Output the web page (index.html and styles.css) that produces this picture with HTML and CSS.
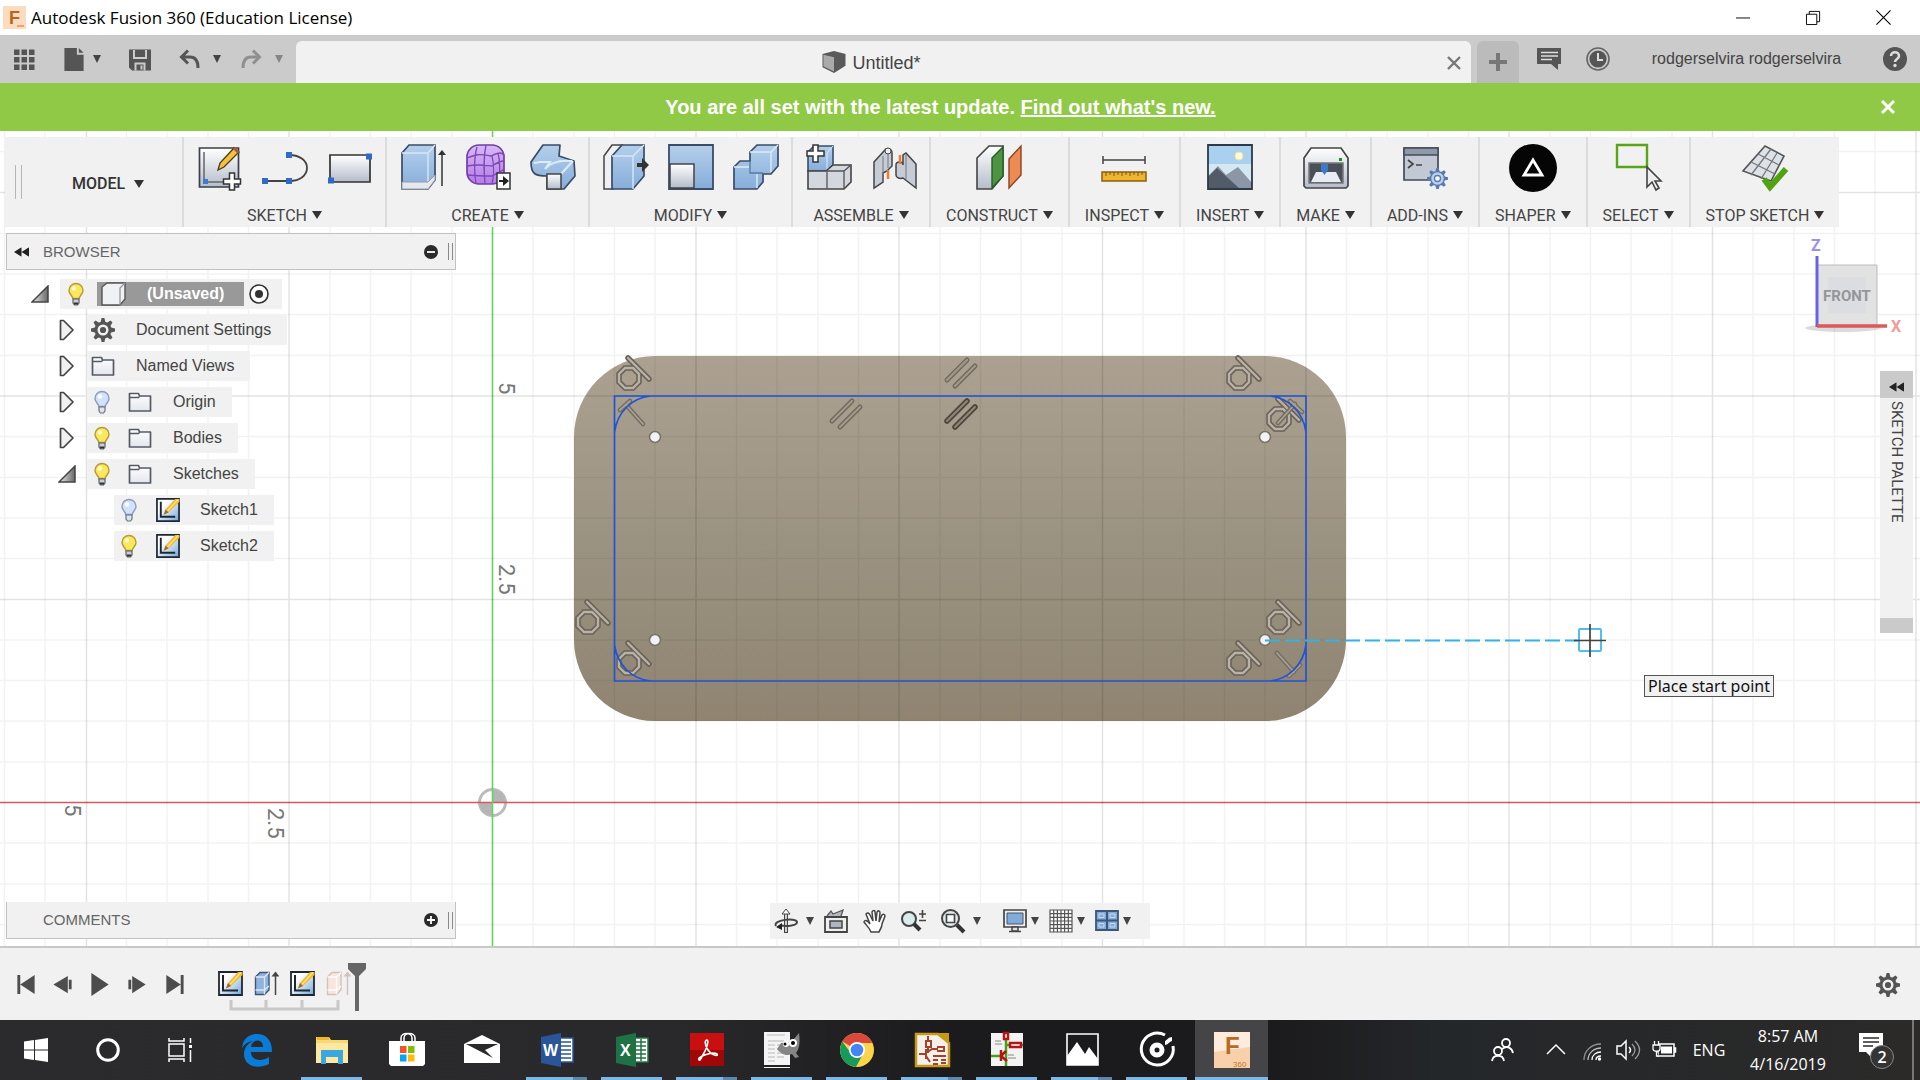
FILE: index.html
```html
<!DOCTYPE html>
<html lang="en">
<head>
<meta charset="utf-8">
<title>Autodesk Fusion 360 (Education License)</title>
<link rel="stylesheet" href="styles.css">
</head>
<body>
<svg class="defs" aria-hidden="true">
  <defs>
    <linearGradient id="blue" x1="0" y1="0" x2="0" y2="1"><stop offset="0" stop-color="#b4cfec"/><stop offset="1" stop-color="#86add9"/></linearGradient>
    <linearGradient id="steel" x1="0" y1="0" x2="0" y2="1"><stop offset="0" stop-color="#fff"/><stop offset="1" stop-color="#b4bccb"/></linearGradient>
    <linearGradient id="paper" x1="0" y1="0" x2="0" y2="1"><stop offset="0" stop-color="#fff"/><stop offset="1" stop-color="#e3e6ec"/></linearGradient>
    <linearGradient id="purple" x1="0" y1="0" x2="0" y2="1"><stop offset="0" stop-color="#d9b8f4"/><stop offset="1" stop-color="#b57bea"/></linearGradient>
    <linearGradient id="body" x1="0" y1="0" x2="0" y2="1"><stop offset="0" stop-color="#aca191"/><stop offset=".5" stop-color="#9b9382"/><stop offset="1" stop-color="#908471"/></linearGradient>
    <linearGradient id="tri" x1="0" y1="0" x2="1" y2="0"><stop offset="0" stop-color="#eee"/><stop offset="1" stop-color="#666"/></linearGradient>
    <linearGradient id="page" x1="0" y1="0" x2="1" y2="1"><stop offset=".3" stop-color="#fff"/><stop offset="1" stop-color="#6fa6dc"/></linearGradient>
  </defs>
  <symbol id="gear" viewBox="0 0 24 24"><g fill="currentColor"><circle cx="12" cy="12" r="8.6"/><path id="tooth" d="M9.6 4 10.6 0h2.8l1 4v16l-1 4h-2.8l-1-4z"/><use href="#tooth" transform="rotate(45 12 12)"/><use href="#tooth" transform="rotate(90 12 12)"/><use href="#tooth" transform="rotate(135 12 12)"/></g><circle cx="12" cy="12" r="4.3" fill="none" stroke="#f1f1f1" stroke-width="2.4"/></symbol>
  <symbol id="bulb-on" viewBox="0 0 18 24"><path d="M9 1.5a7 7 0 0 0-7 7c0 3.500 3.500 5 3.800 8h6.400c.3-3 3.800-4.500 3.800-8a7 7 0 0 0-7-7z" fill="#fbe75a" stroke="#b49a3a" stroke-width="1.4"/><circle cx="7" cy="6.500" r="2.200" fill="#fffbd0"/><path d="M6 17h6v4l-1.500 2h-3L6 21z" fill="#c9ced6" stroke="#5b6068" stroke-width="1.200"/><path d="M7 21.500h4" stroke="#333" stroke-width="2"/></symbol>
  <symbol id="bulb-off" viewBox="0 0 18 24"><path d="M9 1.500a7 7 0 0 0-7 7c0 3.500 3.500 5 3.800 8h6.400c.3-3 3.800-4.500 3.800-8a7 7 0 0 0-7-7z" fill="#d3e2fb" stroke="#8a9cc2" stroke-width="1.400"/><circle cx="7" cy="6.500" r="2.200" fill="#fff"/><path d="M6 17h6v4l-1.500 2h-3L6 21z" fill="#dfe3ea" stroke="#6b7280" stroke-width="1.200"/></symbol>
  <symbol id="folder" viewBox="0 0 24 22"><path d="M1.500 19V2.500h9l1 2.500h11v15h-21z" fill="url(#paper)" stroke="#555b66" stroke-width="1.700" stroke-linejoin="round"/><path d="M2 6.500h8.500l1.500-1.500" fill="none" stroke="#555b66" stroke-width="1.300"/></symbol>
  <symbol id="sketch" viewBox="0 0 25 25"><path d="M1 1h23v23H1z" fill="url(#page)" stroke="#1d2733" stroke-width="1.800"/><path d="M5 4v15.500h15" fill="none" stroke="#1d2733" stroke-width="2"/><path d="M8 17.500 10 12 20 1h4.500v3L13 15z" fill="#f4b92a"/><path d="m12 13.500 11-12" stroke="#ffe680" stroke-width="1.500"/><path d="M8 17.500 10 12l3 3z" fill="#9a6b3a"/></symbol>
  <symbol id="closed" viewBox="0 0 16 22"><path d="M1.500 1.500h3l9.500 9.500-9.500 9.500h-3z" fill="#f0f0f0" stroke="#444" stroke-width="1.700" stroke-linejoin="round"/></symbol>
  <symbol id="open" viewBox="0 0 18 18"><path d="M17 1v16H1z" fill="url(#tri)" stroke="#444" stroke-width="1.500"/></symbol>
  <symbol id="extrude" viewBox="0 0 25 25"><path d="M1.500 6 6 1.500h9V19l-4.500 4.500h-9z" fill="var(--face,#8fb3dd)" stroke="var(--edge,#3f5573)" stroke-width="1.400"/><path d="M1.500 6h9L15 1.500M10.500 6v17.500M1.500 19h9l4.500-4" fill="none" stroke="var(--lite,#dbe8f6)" stroke-width="1.300"/><path d="M21.500 24V3" stroke="var(--edge,#444)" stroke-width="1.500"/><path d="m17.500 5.500 4-5 4 5z" fill="var(--edge,#444)"/></symbol>
  <symbol id="tan" viewBox="-22 -24 46 46" overflow="visible"><g fill="none" stroke-linecap="round"><g stroke="#6a6256" stroke-width="5.500"><path d="M-4-10h8l6 6v8l-6 6h-8l-6-6v-8zM-1-20 20 1"/></g><g stroke="#b8b2a8" stroke-width="2.400"><path d="M-4-10h8l6 6v8l-6 6h-8l-6-6v-8zM-1-20 20 1"/></g></g></symbol>
  <symbol id="rewind" viewBox="0 0 16 10"><path d="M8 0v10L0 5zM16 0v10L8 5z" fill="#222"/></symbol>
</svg>

<header class="titlebar">
  <svg class="logo" viewBox="0 0 23 23"><path d="M0 0h23v23H0z" fill="#fbdcc0"/><text x="6" y="18" font-family="Liberation Sans" font-weight="700" font-size="18" fill="#b8661d">F</text><path d="M14 19h7v2h-7z" fill="#eba368"/></svg>
  <h1>Autodesk Fusion 360 (Education License)</h1>
  <div class="window-buttons">
    <button aria-label="Minimize"><svg viewBox="0 0 16 16"><path d="M0 8.500h15" stroke="#000"/></svg></button>
    <button aria-label="Restore"><svg viewBox="0 0 16 16"><path d="M.5 4.500h11v11H.5zM3.500 4.500v-3h11v11h-3" fill="none" stroke="#000"/></svg></button>
    <button aria-label="Close"><svg viewBox="0 0 16 16"><path d="m.5.5 15 15m0-15-15 15" stroke="#000" stroke-width="1.200"/></svg></button>
  </div>
</header>

<div class="appbar">
  <div class="quick">
    <button aria-label="Data panel"><svg class="i22" viewBox="0 0 22 22"><path d="M1 1h5.500v5.500H1zm7.500 0H14v5.500H8.500zM16 1h5.500v5.500H16zM1 8.500h5.500V14H1zm7.500 0H14V14H8.500zm7.500 0h5.500V14H16zM1 16h5.500v5.500H1zm7.500 0H14v5.500H8.500zm7.500 0h5.500v5.500H16z" fill="#555"/></svg></button>
    <button class="split near" aria-label="File"><svg class="i22" viewBox="0 0 22 24"><path d="M1 0h13v7h7v17H1z" fill="#555"/><path d="M16 0v5h5z" fill="#555"/></svg><i class="caret"></i></button>
    <button aria-label="Save"><svg class="i22" viewBox="0 0 22 22"><path d="M0 1h22v21H3l-3-3z" fill="#555"/><path d="M5 1.500v8h12v-8M6.500 22v-7h9v7M12.500 17v4" fill="none" stroke="#cbcbcb" stroke-width="2"/></svg></button>
    <div class="history">
      <button class="split" aria-label="Undo"><svg class="i22" viewBox="0 0 22 22"><path d="M9 2 2.500 8.500 9 15M3 8.500h8c6 0 8 5 8 11" fill="none" stroke="#555" stroke-width="3"/></svg><i class="caret"></i></button>
      <button class="split dim" aria-label="Redo"><svg class="i22" viewBox="0 0 22 22"><path d="m12 2 6.500 6.500L12 15M18 8.500h-8c-6 0-8 5-8 11" fill="none" stroke="#555" stroke-width="3"/></svg><i class="caret"></i></button>
    </div>
  </div>
  <div class="tab">
    <span class="tab-name"><svg viewBox="0 0 24 24"><path d="M0 3 12 0l12 3v12.500L12 23 0 17z" fill="#5a5a5a"/><path d="m1 4 11 2.500v15L1 16z" fill="#aaa"/></svg>Untitled*</span>
    <button class="tab-close" aria-label="Close tab"><svg viewBox="0 0 14 14"><path d="m1 1 12 12m0-12L1 13" stroke="#777" stroke-width="2.400"/></svg></button>
  </div>
  <button class="new-tab" aria-label="New tab"><svg viewBox="0 0 18 20"><path d="M9 1v18M0 10h18" stroke="#777" stroke-width="4"/></svg></button>
  <div class="account">
    <button aria-label="Comments"><svg class="i24" viewBox="0 0 24 24"><path d="M0 1h24v16h-3v6l-7-6H0z" fill="#555"/><path d="M4 5.500h17M4 9h17M4 12.500h11" stroke="#ddd" stroke-width="1.600"/></svg></button>
    <button aria-label="Job status"><svg class="i24" viewBox="0 0 24 24"><circle cx="12" cy="12" r="11" fill="none" stroke="#666" stroke-width="1.600"/><circle cx="12" cy="12" r="8.600" fill="#555"/><path d="M12 6v7h5" fill="none" stroke="#ddd" stroke-width="2"/></svg></button>
    <button class="user">rodgerselvira rodgerselvira</button>
    <button aria-label="Help"><svg class="i24" viewBox="0 0 24 24"><circle cx="12" cy="12" r="12" fill="#555"/><path d="M8 9c0-5 8-5 8 0 0 3-4 3-4 6" fill="none" stroke="#ddd" stroke-width="2.600"/><circle cx="12" cy="18.500" r="1.700" fill="#ddd"/></svg></button>
  </div>
</div>

<div class="banner">
  <p>You are all set with the latest update. <a href="#">Find out what's new.</a></p>
  <button aria-label="Dismiss"><svg viewBox="0 0 14 14"><path d="m1 1 12 12m0-12L1 13" stroke="#fff" stroke-width="3"/></svg></button>
</div>

<main class="canvas">
  <svg class="scene">
    <path d="M0 671.500h4000" stroke="#d8595b" stroke-width="1.600"/>
    <path d="M492.500 0v2000" stroke="#5ed65e" stroke-width="1.600"/>
    <rect x="574" y="225" width="772" height="365" rx="81" fill="url(#body)"/>
    <path stroke="#000" stroke-opacity=".05" stroke-width="1.500" d="M4.500 0v2000M45 0v2000M126.500 0v2000M167 0v2000M208 0v2000M248.500 0v2000M330 0v2000M370.500 0v2000M411 0v2000M452 0v2000M533 0v2000M574 0v2000M614.500 0v2000M655 0v2000M736.500 0v2000M777 0v2000M818 0v2000M858.500 0v2000M940 0v2000M980.500 0v2000M1021 0v2000M1062 0v2000M1143 0v2000M1184 0v2000M1224.500 0v2000M1265 0v2000M1346.500 0v2000M1387 0v2000M1428 0v2000M1468.500 0v2000M1550 0v2000M1590.500 0v2000M1631 0v2000M1672 0v2000M1753 0v2000M1794 0v2000M1834.500 0v2000M1875 0v2000M0 20.500h4000M0 102.500h4000M0 143h4000M0 183.500h4000M0 224.500h4000M0 305.500h4000M0 346.500h4000M0 387h4000M0 427.500h4000M0 509h4000M0 549.500h4000M0 590h4000M0 631h4000M0 712h4000M0 753h4000M0 793.500h4000"/>
    <path stroke="#000" stroke-opacity=".11" stroke-width="1.500" d="M86.500 0v2000M289 0v2000M696 0v2000M899 0v2000M1102.500 0v2000M1306 0v2000M1509 0v2000M1712.500 0v2000M1916 0v2000M0 61.500h4000M0 265h4000M0 468.500h4000"/>
    <g transform="translate(492.500 671.500)"><circle r="13" fill="#fff" fill-opacity=".8" stroke="#bbb" stroke-width="3"/><path d="M0 0v-13a13 13 0 0 1 13 13zM0 0v13a13 13 0 0 1-13-13z" fill="#b5b5b5"/><path d="M-15 0h30" stroke="#d8595b" stroke-width="1.500"/><path d="M0-15v30" stroke="#5ed65e" stroke-width="1.500"/></g>
    <use href="#tan" x="607" y="223" width="46" height="46"/>
    <use href="#tan" x="1217" y="223" width="46" height="46"/>
    <use href="#tan" x="1257" y="264" width="46" height="46"/>
    <use href="#tan" x="566" y="467" width="46" height="46"/>
    <use href="#tan" x="607" y="508" width="46" height="46"/>
    <use href="#tan" x="1257" y="467" width="46" height="46"/>
    <use href="#tan" x="1217" y="508" width="46" height="46"/>
    <g fill="none" stroke-linecap="round">
      <g stroke="#716a5e" stroke-width="5"><path d="m947 249 20-20m-12 26 20-20"/><path d="m832 290 20-20m-12 26 20-20"/></g>
      <g stroke="#a0988a" stroke-width="2.200"><path d="m947 249 20-20m-12 26 20-20"/><path d="m832 290 20-20m-12 26 20-20"/></g>
      <path d="m947 290 20-20m-12 26 20-20" stroke="#4d463c" stroke-width="5.500"/><path d="m947 290 20-20m-12 26 20-20" stroke="#8f8778" stroke-width="2"/>
      <path d="m620 279 10-9m-3 5 16 18M1277 522l17 19m-5 4 11-11M1278 292l17-19m-5-3 12 11" stroke="#746c60" stroke-width="4.500"/><path d="m620 279 10-9m-3 5 16 18M1277 522l17 19m-5 4 11-11M1278 292l17-19m-5-3 12 11" stroke="#a8a194" stroke-width="1.800"/>
      <path d="M614.500 265H1306v285H614.500zM614.500 301c3-20 17-34 36-36M1306 301c-3-20-17-34-36-36M614.500 514c3 20 17 34 36 36M1306 514c-3 20-17 34-36 36" stroke="#1f54d8" stroke-width="1.700"/>
    </g>
    <g fill="#f2f2f2" stroke="#77716a" stroke-width="1.500"><circle cx="655" cy="306" r="5.500"/><circle cx="1265" cy="306" r="5.500"/><circle cx="655" cy="509" r="5.500"/><circle cx="1265" cy="509" r="5.500"/></g>
    <path d="M1265 509.500h313" stroke="#35b1e4" stroke-width="2" stroke-dasharray="15 5"/>
    <rect x="1579" y="498" width="22" height="22" rx="1" fill="none" stroke="#4fc0ec" stroke-width="2"/>
    <path d="M1574 509.500h32M1590 493v33" stroke="#444" stroke-width="1.700"/>
    <g class="ticks"><text transform="translate(499 251) rotate(90)">5</text><text transform="translate(499 433) rotate(90)">2.5</text><text transform="translate(65 673) rotate(90)">5</text><text transform="translate(268 677) rotate(90)">2.5</text></g>
  </svg>

  <nav class="toolbar" aria-label="Toolbar">
    <div class="grip"></div>
    <button class="workspace">MODEL <i class="caret"></i></button>
    <section class="group"><div class="tools">
      <button aria-label="Create sketch"><svg viewBox="0 0 44 46"><path d="M1.500 4h39v39h-39z" fill="url(#steel)" stroke="#3a3f48" stroke-width="1.700"/><path d="M6 8v30h22" fill="none" stroke="#666" stroke-width="1.500"/><path d="M5 35h5v5H5z" fill="#3b7bd6"/><path d="m20 26 2-7L36 4l5 4-15 15z" fill="#f3c13c" stroke="#4d3a16" stroke-width="1.300"/><path d="m35 5 5 5 1-3-4-4z" fill="#a85a3a"/><path d="M31.500 29h5v6h6v5h-6v6h-5v-6h-6v-5h6z" fill="#fff" stroke="#333" stroke-width="1.500"/></svg></button>
      <button aria-label="Line"><svg viewBox="0 0 44 46"><path d="M2 37h24c24 0 24-26 0-26" fill="none" stroke="#444" stroke-width="1.800"/><path d="M-1 34h6v6h-6zM23 34h6v6h-6zM23 8h6v6h-6z" fill="#2f69c9"/></svg></button>
      <button aria-label="Rectangle"><svg viewBox="0 0 44 46"><path d="M2 11h40v27H2z" fill="url(#steel)" stroke="#333" stroke-width="1.700"/><path d="M0 33.500h6v6H0zM38 9.500h6v6h-6z" fill="#2f69c9"/></svg></button>
    </div><button class="label">SKETCH <i class="caret"></i></button></section>
    <section class="group"><div class="tools">
      <button aria-label="Extrude"><svg viewBox="0 0 44 46"><path d="m1 9 7-8h26v35l-7 9H1z" fill="url(#blue)" stroke="#3a4c66" stroke-width="1.700"/><path d="M1 9h26l7-8M27 9v36" fill="none" stroke="#d8e6f6" stroke-width="1.400"/><path d="M1 38h26l7-7v5l-7 9H1z" fill="#e5e9ee" stroke="#99a"/><path d="M41 42V8" stroke="#333" stroke-width="1.500"/><path d="m37 11 4-5 4 5z" fill="#333"/></svg></button>
      <button aria-label="Create form"><svg viewBox="0 0 44 46"><rect x="1" y="1" width="37" height="39" rx="12" fill="url(#purple)" stroke="#6d3fa5" stroke-width="1.700"/><path d="M1 14c10-4 12-4 24-2 8-4 12-4 13 0M1 22c12-2 16-1 25 0 6-4 10-5 12-5M2 31c10 1 18 1 24 1 6-3 10-5 12-7M11 3c-3 10-3 26-1 37M20 1c-3 14-2 26-1 39M26 12c2 8 2 20 0 28M32 9c2 8 2 18 1 26" fill="none" stroke="#7b48b8" stroke-width="1.300"/><path d="M31 29h13v16H31z" fill="#fff" stroke="#333" stroke-width="1.500"/><path d="M33 36h4v-4l6 5-6 5v-4h-4z" fill="#222"/></svg></button>
      <button aria-label="Sweep"><svg viewBox="0 0 44 46"><path d="M0 18 12 1h17l-1 11 15 5 1 15-11 13H16V32C4 32 0 30 0 18z" fill="url(#blue)" stroke="#3a4c66" stroke-width="1.700" stroke-linejoin="round"/><path d="m3 19 6-1h10l-5 7c5-6 15-9 27-8M30 30l12-13" fill="none" stroke="#dcebf8" stroke-width="2"/><path d="M16 30h14v15H16z" fill="url(#steel)" stroke="#444" stroke-width="1.500"/></svg></button>
    </div><button class="label">CREATE <i class="caret"></i></button></section>
    <section class="group"><div class="tools">
      <button aria-label="Press pull"><svg viewBox="0 0 44 46"><path d="m0 12 8-11h10L9 12v33H0z" fill="#eef0f3" stroke="#444" stroke-width="1.500"/><path d="M8 12 18 1h22v31L29 45H8z" fill="url(#blue)" stroke="#3a4c66" stroke-width="1.700"/><path d="M8 12h21L40 1M29 12v33" fill="none" stroke="#d8e6f6" stroke-width="1.400"/><path d="M33 19h5v-5l7 7-7 7v-5h-5z" fill="#333"/></svg></button>
      <button aria-label="Fillet"><svg viewBox="0 0 44 46"><path d="M0 1h44v44H0z" fill="url(#blue)" stroke="#3a4c66" stroke-width="1.800"/><path d="M1 20h24v24H1z" fill="url(#steel)" stroke="#444" stroke-width="1.500"/></svg></button>
      <button aria-label="Combine"><svg viewBox="0 0 44 46"><path d="m0 23 6-6h10V8l7-7h21v21l-7 8h-8v8l-6 7H0z" fill="url(#blue)" stroke="#3a4c66" stroke-width="1.700"/><path d="M16 8h21l7-7M37 8v20M0 23h15M23 30v14" fill="none" stroke="#dcebf8" stroke-width="1.400"/><path d="M16 17v12h13" fill="none" stroke="#5878a0" stroke-width="1.300"/></svg></button>
    </div><button class="label">MODIFY <i class="caret"></i></button></section>
    <section class="group"><div class="tools">
      <button aria-label="New component"><svg viewBox="0 0 44 46"><path d="m1 8 6-6h19v19l-6 6H1z" fill="url(#blue)" stroke="#3a4c66" stroke-width="1.600"/><path d="M20 27V9l6-7" fill="none" stroke="#dcebf8"/><path d="M1 27h18l7-6h18v17l-7 7H1z" fill="#d3d7de" stroke="#444" stroke-width="1.600"/><path d="M20 27v18M20 27h17l7-6M37 27v18" fill="none" stroke="#555" stroke-width="1.300"/><path d="M6 1h5v6h6v5h-6v6H6v-6H0V7h6z" fill="#fff" stroke="#333" stroke-width="1.500"/></svg></button>
      <button aria-label="Joint"><svg viewBox="0 0 44 46"><path d="M2 18 12 7c2-4 8-3 8 2v13l-5 5-4 2v9l-9 6z" fill="#c5ccd6" stroke="#444" stroke-width="1.500"/><path d="M11 12v26M16 8v16" stroke="#777"/><circle cx="16" cy="7" r="3" fill="#eee" stroke="#444"/><path d="M24 21c0-4 7-4 7 0V11l3-2 10 11v24L31 34c-3 1-7 0-7-3z" fill="#c5ccd6" stroke="#444" stroke-width="1.500"/><path d="M34 10v25" stroke="#777"/><path d="M16 26v9M28 11v9" stroke="#ec7c30" stroke-width="2.500"/></svg></button>
    </div><button class="label">ASSEMBLE <i class="caret"></i></button></section>
    <section class="group"><div class="tools one">
      <button aria-label="Offset plane"><svg viewBox="0 0 44 46"><path d="M0 14 12 2h14v30L15 45H0z" fill="url(#steel)" stroke="#444" stroke-width="1.600"/><path d="M15 14 26 3v29L15 44z" fill="#4b9440" stroke="#2d5c28" stroke-width="1.400"/><path d="M32 15 44 2v29L32 44z" fill="#ee8b55" stroke="#8b4320" stroke-width="1.400"/></svg></button>
    </div><button class="label">CONSTRUCT <i class="caret"></i></button></section>
    <section class="group"><div class="tools one">
      <button aria-label="Measure"><svg viewBox="0 0 44 46"><path d="M1 16h42M1 12v8M43 12v8" stroke="#444" stroke-width="1.500"/><path d="M0 28h44v9H0z" fill="#efb52f" stroke="#8a5f10" stroke-width="1.500"/><path d="M4 28v4m4-4v3m4-3v4m4-4v3m4-3v4m4-4v3m4-3v4m4-4v3m4-3v4m4-4v3" stroke="#7d5510"/></svg></button>
    </div><button class="label">INSPECT <i class="caret"></i></button></section>
    <section class="group"><div class="tools one">
      <button aria-label="Insert"><svg viewBox="0 0 44 46"><path d="M0 1h44v44H0z" fill="#a9d0ee"/><path d="M0 20h44v25H0z" fill="#d4e8f3"/><path d="M0 32 10 22l8 9 12-8 14 16v6H0z" fill="#8b97a6"/><path d="M0 45V33l9-9 23 21z" fill="#535b68"/><circle cx="31" cy="12" r="4" fill="#fffbe0" stroke="#f5e38c"/><path d="M0 1h44v44H0z" fill="none" stroke="#2e3a48" stroke-width="1.800"/></svg></button>
    </div><button class="label">INSERT <i class="caret"></i></button></section>
    <section class="group"><div class="tools one">
      <button aria-label="3D print"><svg viewBox="0 0 44 46"><path d="m0 14 7-10h30l7 10v28l-2 2H2l-2-2z" fill="url(#steel)" stroke="#444" stroke-width="1.700"/><path d="M5 19h34v20H5z" fill="#4b5058" stroke="#777" stroke-width="1.500"/><path d="M12 28h20l5 10H7z" fill="#e8ecf2"/><path d="M17 20h7v6l-3.500 5L17 26z" fill="#3b79c9"/><path d="M35 14h3v3h-3z" fill="#1b9422"/></svg></button>
    </div><button class="label">MAKE <i class="caret"></i></button></section>
    <section class="group"><div class="tools one">
      <button aria-label="Scripts and add-ins"><svg viewBox="0 0 44 46"><path d="M1 4h34v32H1z" fill="#c2c9d5" stroke="#444b57" stroke-width="1.700"/><path d="M1 4h34v7H1z" fill="#8f99a8" stroke="#444b57" stroke-width="1.500"/><path d="m5 16 5 4-5 4M13 21h6" fill="none" stroke="#444" stroke-width="1.700"/><g transform="translate(24 24)" color="#587aac"><use href="#gear" width="21" height="21"/><circle cx="10.500" cy="10.500" r="6.200" fill="#b9d0ec"/><circle cx="10.500" cy="10.500" r="3" fill="#fff" stroke="#587aac" stroke-width="1.300"/></g></svg></button>
    </div><button class="label">ADD-INS <i class="caret"></i></button></section>
    <section class="group"><div class="tools one">
      <button aria-label="Shaper"><svg viewBox="0 0 44 46"><circle cx="22" cy="24" r="24" fill="#050505"/><path d="m22 16 9 15H13z" fill="none" stroke="#fff" stroke-width="2.800"/></svg></button>
    </div><button class="label">SHAPER <i class="caret"></i></button></section>
    <section class="group"><div class="tools one">
      <button aria-label="Select"><svg viewBox="0 0 44 46"><path d="M1 1h30v22H1z" fill="none" stroke="#58a618" stroke-width="2.400"/><path d="M31 23v20l5-5 4 8 3-2-4-7h6z" fill="#eee" stroke="#444" stroke-width="1.600"/></svg></button>
    </div><button class="label">SELECT <i class="caret"></i></button></section>
    <section class="group last"><div class="tools one">
      <button aria-label="Stop sketch"><svg viewBox="0 0 44 46"><path d="m22 2 19 10-13 25L0 27z" fill="#dde1e8" stroke="#555" stroke-width="1.600"/><path d="m28 5-20 26m26-22L18 35M15 10l21 11M8 18l24 12" stroke="#777" stroke-width="1.300"/><path d="m21 35 6 8 16-18" fill="none" stroke="#51a30f" stroke-width="6"/></svg></button>
    </div><button class="label">STOP SKETCH <i class="caret"></i></button></section>
  </nav>

  <div class="middle">
    <aside class="browser">
      <header class="panel">
        <button class="rew" aria-label="Collapse"><svg viewBox="0 0 16 10"><use href="#rewind"/></svg></button>
        <h2>BROWSER</h2>
        <button aria-label="Hide"><svg class="dot" viewBox="0 0 14 14"><circle cx="7" cy="7" r="7" fill="#2a2a2a"/><path d="M3 7h8" stroke="#fff" stroke-width="1.800"/></svg></button>
        <span class="handle"></span>
      </header>
      <ul class="tree">
        <li><svg class="exp"><use href="#open" x="4" y="6" width="18" height="18"/></svg><div class="chip root"><svg><use href="#bulb-on" x="7" y="3" width="18" height="24"/></svg><span class="sel"><svg viewBox="0 0 30 24"><path d="m5 5 5-4h18v16l-5 6H5z" fill="#f0f1f4" stroke="#555" stroke-width="1.400"/><path d="M23 23V6l5-5" fill="none" stroke="#999" stroke-width="1.300"/></svg>(Unsaved)</span><svg class="radio" viewBox="0 0 22 22"><circle cx="11" cy="11" r="9" fill="#fff" stroke="#333" stroke-width="1.600"/><circle cx="11" cy="11" r="4" fill="#333"/></svg></div></li>
        <li class="l1"><svg class="exp"><use href="#closed" x="5" y="4" width="16" height="22"/></svg><div class="chip"><svg color="#555"><use href="#gear" x="4" y="3" width="24" height="24"/></svg><span>Document Settings</span></div></li>
        <li class="l1"><svg class="exp"><use href="#closed" x="5" y="4" width="16" height="22"/></svg><div class="chip"><svg><use href="#folder" x="4" y="4" width="24" height="22"/></svg><span>Named Views</span></div></li>
        <li class="l1"><svg class="exp"><use href="#closed" x="5" y="4" width="16" height="22"/></svg><div class="chip"><svg><use href="#bulb-off" x="6" y="3" width="18" height="24"/></svg><svg><use href="#folder" x="4" y="4" width="24" height="22"/></svg><span>Origin</span></div></li>
        <li class="l1"><svg class="exp"><use href="#closed" x="5" y="4" width="16" height="22"/></svg><div class="chip"><svg><use href="#bulb-on" x="6" y="3" width="18" height="24"/></svg><svg><use href="#folder" x="4" y="4" width="24" height="22"/></svg><span>Bodies</span></div></li>
        <li class="l1"><svg class="exp"><use href="#open" x="4" y="6" width="18" height="18"/></svg><div class="chip"><svg><use href="#bulb-on" x="6" y="3" width="18" height="24"/></svg><svg><use href="#folder" x="4" y="4" width="24" height="22"/></svg><span>Sketches</span></div></li>
        <li class="l2"><svg class="exp"></svg><div class="chip"><svg><use href="#bulb-off" x="6" y="3" width="18" height="24"/></svg><svg><use href="#sketch" x="5" y="3" width="24" height="24"/></svg><span>Sketch1</span></div></li>
        <li class="l2"><svg class="exp"></svg><div class="chip"><svg><use href="#bulb-on" x="6" y="3" width="18" height="24"/></svg><svg><use href="#sketch" x="5" y="3" width="24" height="24"/></svg><span>Sketch2</span></div></li>
      </ul>
    </aside>
    <div class="right">
      <svg class="cube" viewBox="0 0 106 106">
        <ellipse cx="48" cy="89" rx="38" ry="4" fill="#000" opacity=".14"/>
        <path d="M22 26h60v60H22z" fill="#e2e2e3" stroke="#bbb"/><path d="M33 38h38v36H33z" fill="#dcdde1"/>
        <text x="52" y="62" text-anchor="middle" class="front">FRONT</text>
        <path d="M22 17v71" stroke="#6a62e6" stroke-width="3"/><path d="M22 87h70" stroke="#dd5a5a" stroke-width="3.500"/>
        <text x="16" y="12" font-family="Roboto" font-weight="700" font-size="16" fill="#9a92f2">Z</text>
        <text x="96" y="93" font-family="Roboto" font-weight="700" font-size="16" fill="#f49a9a">X</text>
      </svg>
      <aside class="palette"><button aria-label="Expand palette"><svg viewBox="0 0 16 10"><use href="#rewind"/></svg></button><h2>SKETCH PALETTE</h2><div class="foot"></div></aside>
    </div>
  </div>

  <div class="bottom">
    <header class="panel comments"><h2>COMMENTS</h2><button aria-label="Show"><svg class="dot" viewBox="0 0 14 14"><circle cx="7" cy="7" r="7" fill="#2a2a2a"/><path d="M3 7h8M7 3v8" stroke="#fff" stroke-width="1.800"/></svg></button><span class="handle"></span></header>
    <nav class="navbar" aria-label="Navigation">
      <button class="orbit" aria-label="Orbit"><svg viewBox="0 0 24 24"><path d="M12 24V4" stroke="#444" stroke-width="4"/><path d="M12 23V4" stroke="#fff" stroke-width="1.500"/><path d="m8 5 4-5 4 5z" fill="#fff" stroke="#444"/><path d="M2 17c-4-6 20-9 21-4 0 4-12 5-17 3" fill="none" stroke="#444" stroke-width="2"/><path d="m2 18 6-4v7z" fill="#222"/></svg><i class="caret"></i></button>
      <button aria-label="Look at"><svg viewBox="0 0 24 24"><path d="M1 8h22v15H1z" fill="#eee" stroke="#444" stroke-width="1.800"/><path d="M6 12h12v7H6z" fill="#aeb5c0" stroke="#444" stroke-width="1.500"/><path d="m3 7 4-5 2 3 10-4-2 6" fill="#b5bac2" stroke="#555" stroke-width="1.300"/></svg></button>
      <button aria-label="Pan"><svg viewBox="0 0 24 24"><path d="M8 23c-2-5-5-7-7-10 1-3 4-1 6 2L3 5c1-2 3-1 4 1l3 6-1-9c1-2 3-2 3 0l1 9 1-9c1-2 3-1 3 1l-1 9 3-7c1-1 3-1 3 1l-3 8c0 4-2 5-3 8z" fill="#fff" stroke="#444" stroke-width="1.500"/></svg></button>
      <button aria-label="Zoom"><svg viewBox="0 0 24 24"><circle cx="7" cy="10" r="7" fill="#d8ecec" stroke="#444" stroke-width="2"/><path d="m12 15 6 6" stroke="#333" stroke-width="4"/><path d="M17 5h7m-3.500-4v8M17 11.500h7" stroke="#444" stroke-width="1.600"/></svg></button>
      <button aria-label="Fit"><svg viewBox="0 0 24 24"><circle cx="9.500" cy="9.500" r="8.500" fill="#dceceb" stroke="#444" stroke-width="2"/><path d="M5.500 5.500h8v8h-8z" fill="#fff" stroke="#444" stroke-width="1.700"/><path d="m16 16 7 7" stroke="#333" stroke-width="4"/></svg><i class="caret"></i></button>
      <button class="tight first" aria-label="Display settings"><svg viewBox="0 0 24 24"><path d="M1 1h22v17H1z" fill="#eee" stroke="#444" stroke-width="1.700"/><path d="M4 4h16v11H4z" fill="#82abd9" stroke="#456"/><path d="M9 18h6v4H9zM6 22.500h12" fill="#ddd" stroke="#444" stroke-width="1.500"/></svg><i class="caret"></i></button>
      <button class="tight" aria-label="Grid and snaps"><svg viewBox="0 0 24 24"><path d="M1 1h22v22H1zM4.700 1v22M8.400 1v22M12 1v22M15.600 1v22M19.300 1v22M1 4.700h22M1 8.400h22M1 12h22M1 15.600h22M1 19.300h22" fill="#fff" stroke="#555" stroke-width="1.200"/></svg><i class="caret"></i></button>
      <button class="tight" aria-label="Viewports"><svg viewBox="0 0 24 24"><path d="M1 2h22v19H1z" fill="#82abd9" stroke="#3d567a" stroke-width="1.800"/><path d="M12 2v19M1 11.500h22" stroke="#3d567a" stroke-width="2"/><path d="M4 5h5v3.500H4zm11 0h5v3.500h-5zM4 14.500h5V18H4zm11 0h5V18h-5z" fill="none" stroke="#c4daf0"/></svg><i class="caret"></i></button>
    </nav>
  </div>
  <div class="tooltip" role="tooltip">Place start point</div>
</main>

<footer class="timeline">
  <div class="transport">
    <button aria-label="Go to start"><svg viewBox="0 0 20 24"><path d="M1 2h3v20H1zM19 2v20L4 12z" fill="#4d4d4d"/></svg></button>
    <button aria-label="Step back"><svg viewBox="0 0 20 24"><path d="M15 3v18L0 12zM16 7h3v10h-3z" fill="#4d4d4d"/></svg></button>
    <button aria-label="Play"><svg viewBox="0 0 20 24"><path d="m1 0 18 12L1 24z" fill="#4d4d4d"/></svg></button>
    <button aria-label="Step forward"><svg viewBox="0 0 20 24"><path d="m5 3 14 9-14 9zM1 7h3v10H1z" fill="#4d4d4d"/></svg></button>
    <button aria-label="Go to end"><svg viewBox="0 0 20 24"><path d="M17 2h3v20h-3zM2 2v20l15-10z" fill="#4d4d4d"/></svg></button>
  </div>
  <div class="features">
    <div class="steps">
      <button aria-label="Sketch1"><svg viewBox="0 0 25 25"><use href="#sketch"/></svg></button>
      <button aria-label="Extrude1"><svg viewBox="0 0 25 25"><use href="#extrude"/></svg></button>
      <button aria-label="Sketch2"><svg viewBox="0 0 25 25"><use href="#sketch"/></svg></button>
      <button class="ghost" aria-label="Extrude2"><svg viewBox="0 0 25 25"><use href="#extrude"/></svg></button>
    </div>
    <svg class="bracket" viewBox="0 0 132 10"><path d="M13 0v9h107V0M48 0v9M84 0v9" fill="none" stroke="#c8c8c8" stroke-width="3"/></svg>
  </div>
  <svg class="marker" viewBox="0 0 18 48"><path d="M0 0h18v6l-7 7v35H7V13L0 6z" fill="#666"/></svg>
  <button class="settings" aria-label="Timeline settings"><svg viewBox="0 0 24 24"><use href="#gear"/></svg></button>
</footer>

<nav class="taskbar" aria-label="Taskbar">
  <div class="system">
    <button aria-label="Start"><svg viewBox="0 0 24 24"><path d="m0 3.500 10-1.400v9.400H0zM11 2l13-2v11.500H11zM0 12.500h10v9.400L0 20.500zM11 12.500h13V24l-13-2z" fill="#fff"/></svg></button>
    <button aria-label="Search"><svg viewBox="0 0 24 24"><circle cx="12" cy="12" r="10.300" fill="none" stroke="#fff" stroke-width="3"/></svg></button>
    <button aria-label="Task view"><svg viewBox="0 0 24 24"><path d="M1 6h15v12H1zM1 0v3h15V0M1 24v-3h15v3M22.500 0v5M22.500 12v12" fill="none" stroke="#fff" stroke-width="1.500"/><path d="M21 7h3v3h-3z" fill="#fff"/></svg></button>
  </div>
  <div class="apps">
    <button aria-label="Edge"><svg viewBox="0 0 36 36"><path d="M3 16C4 6 11 2 18 2c10 0 15 7 15 18H12c0 9 11 10 18 5v7C18 38 5 34 5 22c0-6 4-11 9-13-6 1-9 4-11 7zm9-1h12c0-9-11-8-12 0z" fill="#0a7bd6"/></svg></button>
    <button class="run" aria-label="File Explorer"><svg viewBox="0 0 36 36"><path d="M2 5h13l2 3h17v23H2z" fill="#f8d775"/><path d="M2 11h32v20H2z" fill="#ffe9a2"/><path d="M3 5h12v3H3z" fill="#efb52c"/><path d="M7 18h22v14h-5v-7H12v7H7z" fill="#3aa7e0"/></svg></button>
    <button aria-label="Store"><svg viewBox="0 0 36 36"><path d="M0 9h36v23l-2 2H2l-2-2z" fill="#fff"/><path d="M12 10V6c0-6 11-6 11 0v4M15 10V6c0-6 11-6 11 0v4" fill="none" stroke="#fff" stroke-width="1.500"/><path d="M11 14h6.500v7H11z" fill="#f35325"/><path d="M19 14h6.500v7H19z" fill="#81bc06"/><path d="M11 22.500h6.500v7H11z" fill="#05a6f0"/><path d="M19 22.500h6.500v7H19z" fill="#ffba08"/></svg></button>
    <button aria-label="Mail"><svg viewBox="0 0 36 36"><path d="M0 12 18 3l18 9v19H0z" fill="#fff"/><path d="M3 12h31l-13 6 8 8L2 12z" fill="#2a2a2b"/></svg></button>
    <button class="run multi" aria-label="Word"><svg viewBox="0 0 36 36"><path d="M19 6h15v24H19z" fill="#fff" stroke="#2a5699" stroke-width="1.500"/><path d="M20 10h12m-12 4h12m-12 4h12m-12 4h12m-12 4h12" stroke="#2a5699" stroke-width="1.500"/><path d="m2 5 20-4v34L2 31z" fill="#2a5699"/><text x="4" y="24" font-family="Liberation Sans" font-weight="700" font-size="16" fill="#fff">W</text></svg></button>
    <button class="run" aria-label="Excel"><svg viewBox="0 0 36 36"><path d="M19 6h15v24H19z" fill="#fff" stroke="#1f7244" stroke-width="1.500"/><path d="M20 10h12m-12 4h12m-12 4h12m-12 4h12m-12 4h12M27 7v22" stroke="#1f7244" stroke-width="1.500"/><path d="m2 5 20-4v34L2 31z" fill="#1f7244"/><text x="6" y="24" font-family="Liberation Sans" font-weight="700" font-size="16" fill="#fff">X</text></svg></button>
    <button class="run multi" aria-label="Acrobat"><svg viewBox="0 0 36 36"><path d="M1 1h34v33H1z" fill="#c90f0f"/><path d="M1 18h34v16H1z" fill="#a00808"/><path d="M10 28c-3-3 14-9 18-6 2 3-6 1-9-4-4-6-3-10-1-10s0 8-3 13-4 8-5 7z" fill="none" stroke="#fff" stroke-width="1.600"/></svg></button>
    <button class="run" aria-label="GIMP"><svg viewBox="0 0 36 36"><path d="M0 0h26v36H0z" fill="#f4f4f4"/><path d="M3 3h18M4 9h16M4 13h7m2 0h7M4 17h7m2 0h7M4 21h7m2 0h7M4 25h7m2 0h7M4 29h7" stroke="#ccc" stroke-width="1.500"/><path d="M0 34h26" stroke="#222" stroke-width="2"/><path d="M17 11c5 0 9-1 12-3l6-7c1 8 1 15-3 20l3 4-4 1-3-4c-6 3-12-1-15-5z" fill="#858585"/><circle cx="22" cy="12" r="3" fill="#fff"/><circle cx="29" cy="11" r="4" fill="#fff"/><circle cx="29" cy="11" r="2"/><circle cx="21" cy="12" r="1.500"/></svg></button>
    <button class="run" aria-label="Chrome"><svg viewBox="0 0 36 36"><circle cx="18" cy="18" r="17" fill="#fcd449"/><path d="M18 18 3.300 9.500A17 17 0 0 1 32.700 9.500L33 11H18z" fill="#d9483b"/><path d="M3.300 9.500A17 17 0 0 0 17 35l7-13-6-4-7 2z" fill="#179a5a"/><circle cx="18" cy="18" r="8" fill="#fff"/><circle cx="18" cy="18" r="6.300" fill="#4285f4"/></svg></button>
    <button class="run multi" aria-label="Schematic"><svg viewBox="0 0 36 36"><path d="M2 2h22l11 9v23H2z" fill="#f5f1ea" stroke="#c79a1d" stroke-width="2.500"/><path d="M24 1h11v10z" fill="#c9990f"/><path d="M14 4v5M12 9h5v6h-5zM14 15v6M5 22h7M12 17v10M12 21l6-4h6M23 15h7v4h-7M12 24l4 6M19 24h13M19 28h5m3 0h5m-13 4h5m3-1h5" fill="none" stroke="#a3432b" stroke-width="2"/></svg></button>
    <button class="run" aria-label="Eeschema"><svg viewBox="0 0 36 36"><path d="M2 1h32v33H2z" fill="#f3f3f3"/><path d="M17 1v33M17 13h17M2 24h10" stroke="#45a31b" stroke-width="2.500"/><path d="M15 1h4v6h-4zM21 11h11v4H21z" fill="#fff" stroke="#b21616" stroke-width="2.500"/><path d="M12 18v11M12 24l5-5M12 24l6 5" fill="none" stroke="#b21616" stroke-width="2.500"/><path d="M6 9h6m-6 3h7m6 11h6m-6 3h8" stroke="#888"/></svg></button>
    <button class="run multi" aria-label="Photos"><svg viewBox="0 0 36 36"><path d="M3 2h31v31H3z" fill="none" stroke="#fff" stroke-width="1.600"/><path d="M3 24 13 10l8 12 4-7 9 12v6H3z" fill="#fff"/></svg></button>
    <button class="run" aria-label="Groove Music"><svg viewBox="0 0 36 36"><path d="M26 3A16 16 0 1 0 34 14" fill="none" stroke="#fff" stroke-width="3"/><path d="M33 7c-4 0-4 4-7 4" fill="none" stroke="#fff" stroke-width="4"/><circle cx="18" cy="18" r="5" fill="none" stroke="#fff" stroke-width="5"/></svg></button>
    <button class="run active" aria-label="Fusion 360"><svg viewBox="0 0 36 36"><path d="M0 0h36v36H0z" fill="#fdebdc"/><path d="M0 20 36 15v21H0z" fill="#f8d1ac"/><text x="11" y="22" font-family="Liberation Sans" font-weight="700" font-size="24" fill="#b76a22">F</text><text x="19" y="35" font-family="Liberation Sans" font-size="8" fill="#cf7426">360</text></svg></button>
  </div>
  <div class="tray">
    <button class="people" aria-label="People"><svg viewBox="0 0 24 24"><g fill="none" stroke="#fff" stroke-width="1.800"><circle cx="16" cy="5" r="4"/><path d="M12 11c5-4 10-1 11 4"/><circle cx="8" cy="13" r="4"/><path d="M2 23c1-7 11-7 12 0"/></g></svg></button>
    <button aria-label="Hidden icons"><svg viewBox="0 0 24 24"><path d="m3 16 9-9 9 9" fill="none" stroke="#fff" stroke-width="1.500"/></svg></button>
    <button aria-label="Network"><svg viewBox="0 0 24 24"><g fill="none" stroke="#fff" stroke-width="1.300"><path d="M4 22C4 13 11 6 21 6" opacity=".5"/><path d="M8 22c0-7 6-12 13-12" opacity=".7"/><path d="M12 22c0-5 4-8 9-8M16 22c0-3 2-4 5-4"/></g><circle cx="19.500" cy="21" r="1.700" fill="#fff"/></svg></button>
    <button aria-label="Volume"><svg viewBox="0 0 24 24"><path d="M1 8h4l5-5v18l-5-5H1z" fill="none" stroke="#fff" stroke-width="1.500"/><path d="M13 9c2 2 2 4 0 6" stroke="#fff" stroke-width="1.500" fill="none"/><path d="M16 6c4 4 4 8 0 12M19 3c6 6 6 12 0 18" fill="none" stroke="#999" stroke-width="1.300"/></svg></button>
    <button aria-label="Battery"><svg viewBox="0 0 24 24"><path d="M6 6h16v12H6v-5M22 10h1.500v4H22" fill="none" stroke="#fff" stroke-width="1.500"/><path d="M9 8.500h11v7H9z" fill="#fff"/><path d="M1 7h7v4c0 3-7 3-7 0zM2.500 3v4m4-4v4M4.500 13v5H7" fill="#2a2a2b" stroke="#fff" stroke-width="1.300"/></svg></button>
    <button class="lang">ENG</button>
    <button class="clock"><span>8:57 AM</span><span>4/16/2019</span></button>
    <button class="action" aria-label="Notifications"><svg viewBox="0 0 36 36"><path d="M1 1h24v19H13v5l-5-5H1z" fill="#fff"/><path d="M5 6h16M5 10h16M5 14h10" stroke="#2a2a2b" stroke-width="1.400"/><circle cx="24" cy="25" r="11.500" fill="#343434" stroke="#888"/><text x="24" y="31" text-anchor="middle" font-family="Open Sans" font-weight="600" font-size="16" fill="#fff">2</text></svg></button>
  </div>
</nav>
</body>
</html>
```
FILE: styles.css
```css
* { box-sizing: border-box; }
body {
  margin: 0;
  min-height: 100vh;
  display: flex;
  flex-direction: column;
  font: 16px/20px "Liberation Sans", Arial, sans-serif;
  color: #444;
  background: #fff;
}
h1, h2, p, ul { margin: 0; padding: 0; font-weight: 400; }
ul { list-style: none; }
button {
  display: flex;
  align-items: center;
  justify-content: center;
  margin: 0;
  padding: 0;
  border: 0;
  background: none;
  font: inherit;
  color: inherit;
}
svg { display: block; flex: none; overflow: visible; }
.defs { position: absolute; width: 0; height: 0; }
.caret {
  border: 4px solid transparent;
  border-top: 8px solid #444;
  border-bottom: 0;
}

/* window title */
.titlebar { display: flex; align-items: center; height: 35px; padding: 0 2px 0 3px; gap: 5px; color: #000; }
.logo { width: 23px; height: 23px; }
.titlebar h1 { flex: 1; font: 17px/24px "Open Sans", sans-serif; }
.window-buttons { display: flex; }
.window-buttons button { width: 70px; height: 33px; }
.window-buttons svg { width: 15px; height: 15px; }

/* application bar */
.appbar { display: flex; align-items: flex-end; height: 48px; background: #cbcbcb; }
.quick { display: flex; align-items: center; gap: 28px; width: 296px; height: 48px; padding-left: 13px; }
.i22 { width: 22px; height: 23px; }
.i24 { width: 24px; height: 24px; }
.split { gap: 12px; }
.near { gap: 8px; }
.history { display: flex; gap: 20px; }
.dim { opacity: .5; }
.quick .caret { border-width: 8px 4px 0; }
.tab {
  flex: 1;
  display: flex;
  align-items: center;
  height: 42px;
  padding: 2px 10px 0 0;
  background: #f1f1f1;
  border-radius: 6px 6px 0 0;
}
.tab-name { flex: 1; display: flex; justify-content: center; gap: 6px; font-size: 18px; line-height: 24px; }
.tab-name svg { width: 24px; height: 23px; }
.tab-close svg { width: 14px; height: 14px; }
.new-tab { width: 42px; height: 42px; margin-left: 6px; background: #bbb; border-radius: 6px 6px 0 0; }
.new-tab svg { width: 18px; height: 20px; }
.account { display: flex; align-items: center; height: 48px; padding: 0 13px 0 18px; gap: 25px; }
.user { width: 223px; }

/* update banner */
.banner {
  display: flex;
  align-items: center;
  height: 48px;
  padding-right: 25px;
  background: #8fc945;
  color: #fff;
}
.banner p { flex: 1; text-align: center; font-size: 20px; line-height: 24px; font-weight: 700; }
.banner a { color: inherit; }
.banner svg { width: 14px; height: 14px; }

/* modelling canvas */
.canvas { position: relative; flex: 1; display: flex; flex-direction: column; overflow: hidden; }
.scene { position: absolute; inset: 0; width: 100%; height: 100%; }
.ticks { font: 22px "Roboto", sans-serif; fill: #777; }
.toolbar, .middle, .bottom { position: relative; }

.toolbar {
  align-self: flex-start;
  display: flex;
  height: 90px;
  margin: 6px 0 0 5px;
  background: #f1f1f1;
  font-family: "Roboto", sans-serif;
}
.grip { width: 7px; height: 34px; margin: 28px 0 0 10px; border: solid #b5b5b5; border-width: 0 1px; }
.workspace { width: 160px; padding: 4px 0 0 12px; gap: 9px; font-weight: 500; color: #333; }
.group { display: flex; flex-direction: column; border-left: 2px solid #dcdcdc; padding: 7px 3px 0; }
.tools { display: flex; height: 46px; }
.tools button { width: 65px; }
.tools.one { justify-content: center; }
.tools.one button { width: 44px; }
.tools svg { width: 44px; height: 46px; }
.label { gap: 5px; height: 36px; padding: 0 12px; align-items: flex-end; color: #444; }
.label .caret { margin-bottom: 7px; }
.toolbar .caret { border-width: 8px 5px 0; border-top-color: #333; }

.middle { flex: 1; display: flex; justify-content: space-between; }
.panel {
  display: flex;
  align-items: center;
  width: 450px;
  height: 37px;
  padding: 0 2px 0 7px;
  border: 1px solid #c2c2c2;
  background: #f1f1f1;
}
.panel h2 { flex: 1; padding-left: 14px; font-size: 15px; color: #666; }
.rew svg { width: 15px; height: 10px; }
.dot { width: 14px; height: 14px; }
.handle { width: 5px; height: 17px; margin-left: 10px; border: solid #888; border-width: 0 1px; }
.browser { margin: 6px 0 0 6px; }
.tree { display: grid; gap: 6px; padding: 9px 0 0 21px; }
.tree li { display: flex; gap: 7px; height: 30px; }
.exp { width: 26px; height: 30px; }
.l1 { padding-left: 27px; }
.l2 { padding-left: 54px; }
.chip { display: flex; align-items: center; gap: 7px; padding-right: 16px; background: #f1f1f1; }
.chip > svg { width: 30px; height: 30px; }
.chip > span { padding-left: 12px; }
.chip > .sel {
  display: flex;
  align-items: center;
  gap: 20px;
  height: 24px;
  padding: 0 20px 0 0;
  background: #999;
  color: #fff;
  font-weight: 700;
}
.sel svg { width: 30px; height: 24px; }
.root { padding-right: 12px; gap: 7px; }
.root > .radio { width: 22px; height: 22px; margin-left: -3px; }

.right { display: flex; flex-direction: column; align-items: flex-end; padding: 12px 7px 0 0; }
.cube { width: 106px; height: 106px; margin-right: 12px; }
.front { font: 700 15px "Roboto", sans-serif; fill: #94969c; }
.palette { width: 33px; height: 262px; margin-top: 26px; display: flex; flex-direction: column; background: #f1f1f1; }
.palette button { height: 27px; padding-top: 5px; background: #cacaca; }
.palette button svg { width: 15px; height: 10px; }
.palette h2 { flex: 1; padding-top: 3px; align-self: center; writing-mode: vertical-rl; font: 15px/20px "Roboto", sans-serif; }
.foot { height: 15px; background: #cacaca; }

.bottom { display: grid; grid-template-columns: 1fr auto 1fr; align-items: center; padding: 0 6px 7px; }
.comments { border-top: 0; padding-left: 22px; }
.navbar { display: flex; gap: 15px; width: 380px; height: 36px; padding-left: 4px; background: #f1f1f1; }
.navbar svg { width: 24px; height: 24px; }
.navbar button { gap: 8px; }
.navbar .orbit { margin-right: -5px; }
.navbar .tight { gap: 4px; margin-right: -5px; }
.navbar .first { margin-left: 7px; }
.tooltip {
  position: absolute;
  left: 1644px;
  top: 544px;
  padding: 0 3px;
  border: 1px solid #555;
  background: #f1f1f1;
  color: #111;
  font: 16px/20px "Noto Sans", sans-serif;
}

/* timeline */
.timeline { display: flex; align-items: flex-start; height: 74px; padding: 0 20px 0 16px; border-top: 2px solid #c8c8c8; background: #f1f1f1; }
.transport { display: flex; gap: 17px; margin-top: 25px; }
.transport svg { width: 20px; height: 23px; }
.features { margin: 23px 0 0 34px; }
.steps { display: flex; gap: 11px; }
.steps svg { width: 25px; height: 25px; }
.ghost { --face: #fae3da; --edge: #c9b8b2; --lite: #fff; opacity: .8; }
.bracket { width: 132px; height: 10px; margin-top: 4px; }
.marker { width: 18px; height: 48px; margin: 15px 0 0 -3px; }
.settings { margin: 25px 0 0 auto; color: #555; }
.settings svg { width: 24px; height: 24px; }

/* taskbar */
.taskbar {
  display: flex;
  height: 60px;
  padding-right: 6px;
  background: linear-gradient(90deg, #2b2b2d 0, #29292b 35%, #1b1a1c 50%, #1b1a1c 66%, #24272a 75%, #2b2a29 100%);
  color: #fff;
  font-family: "Open Sans", sans-serif;
}
.system { display: flex; margin-right: 4px; }
.system button { width: 72px; }
.system svg { width: 24px; height: 24px; }
.apps { display: flex; gap: 2px; }
.apps button { position: relative; width: 73px; }
.apps svg { width: 36px; height: 36px; }
.run::after { content: ""; position: absolute; inset: auto 6px 0; height: 3px; background: #7ab8ea; }
.multi::after { background: linear-gradient(90deg, #7ab8ea 47px, #5b88ad 47px); }
.active { background: #454446; }
.active::after { inset: auto 0 0; }
.tray { display: flex; margin-left: auto; border-right: 2px solid #777; }
.tray button { width: 36px; }
.tray svg { width: 24px; height: 24px; }
.tray .people { width: 72px; }
.tray .lang { width: 54px; }
.tray .clock { width: 104px; flex-direction: column; line-height: 28px; }
.tray .action { width: 72px; }
.tray .action svg { width: 36px; height: 36px; }
```
